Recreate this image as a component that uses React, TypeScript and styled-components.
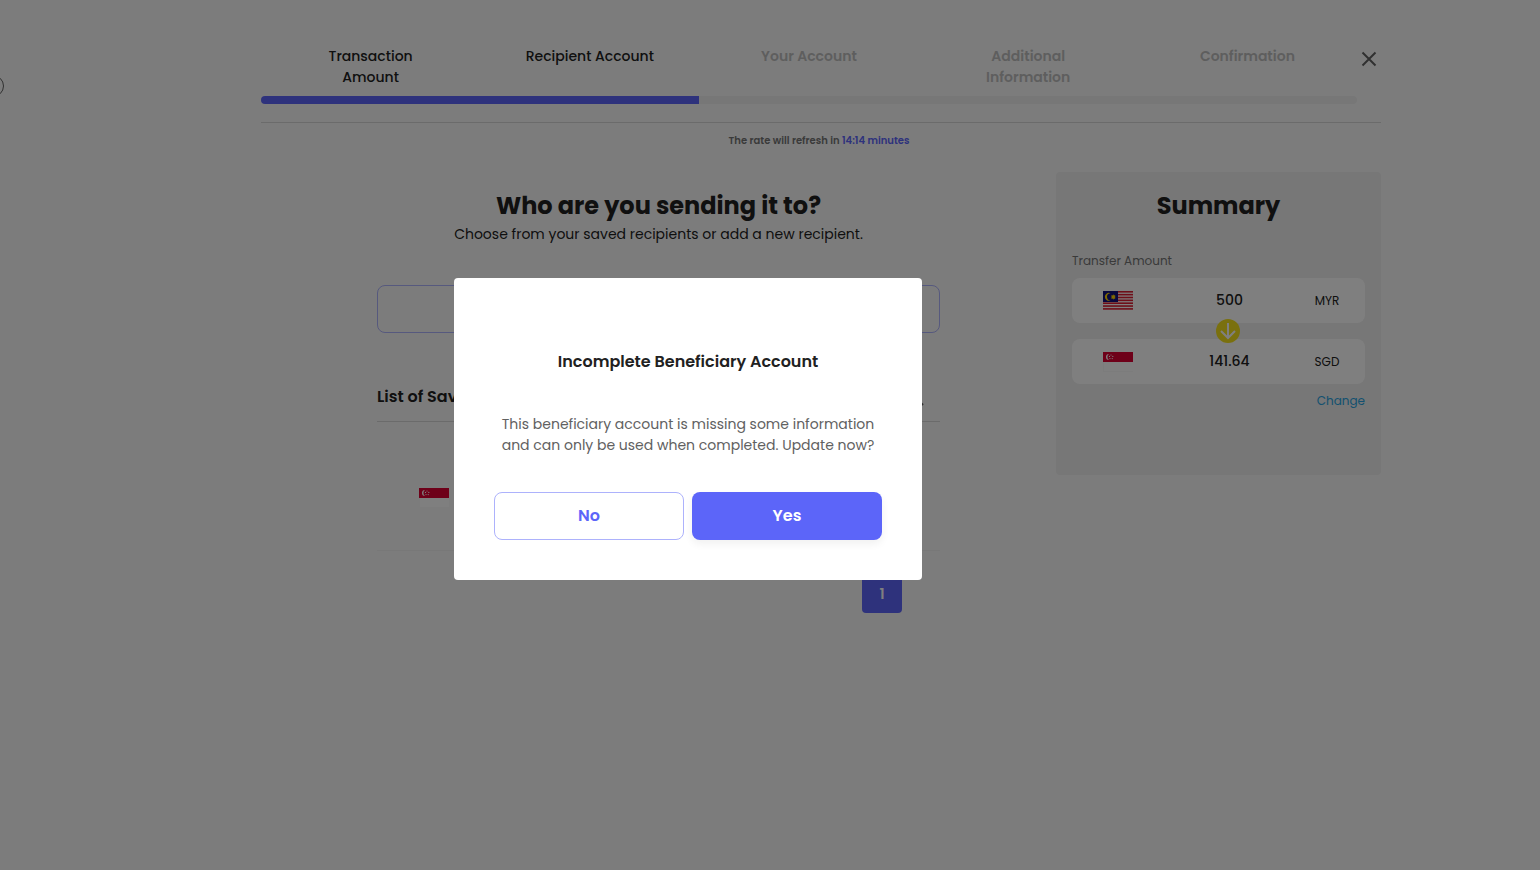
import React from 'react';
import styled, { createGlobalStyle, css } from 'styled-components';

const GlobalStyle = createGlobalStyle`
  *, *::before, *::after { box-sizing: border-box; }
  body {
    margin: 0;
    background: #f9f9f9;
    color: #212121;
    font-family: Poppins, Inter, sans-serif;
    font-size: 14px;
    line-height: 21px;
  }
  button { font-family: inherit; cursor: pointer; }
  h1, h2, h3, p, ol, ul { margin: 0; padding: 0; }
`;

const Shell = styled.div`
  display: flex;
  min-height: 100vh;
`;

const Sidebar = styled.aside`
  position: relative;
  flex: 0 0 102px;
`;

const CollapseButton = styled.button`
  position: absolute;
  top: 75px;
  left: -18px;
  width: 22px;
  height: 22px;
  padding: 0;
  border: 1px solid #616161;
  border-radius: 50%;
  background: transparent;
`;

const Page = styled.main`
  flex: 1;
  max-width: 1120px;
  margin: 0 auto;
  padding: 46px 0 40px;
`;

const Header = styled.header`
  display: flex;
  align-items: flex-start;
  padding-bottom: 18px;
  border-bottom: 1px solid #d6d6d6;
`;

const Steps = styled.ol`
  display: grid;
  grid-template-columns: repeat(5, 1fr);
  flex: 1;
  list-style: none;
`;

const Step = styled.li<{ $done?: boolean }>`
  display: flex;
  flex-direction: column;
  justify-content: space-between;
  gap: 8px;
  color: ${p => (p.$done ? '#212121' : '#bdbdbd')};
  font-weight: ${p => (p.$done ? 500 : 600)};
  text-align: center;

  &::after {
    content: '';
    height: 8px;
    background: ${p => (p.$done ? '#5c65f9' : '#eeeeee')};
  }
  &:first-child::after { border-radius: 4px 0 0 4px; }
  &:last-child::after { border-radius: 0 4px 4px 0; }
`;

const StepLabel = styled.span`
  padding: 0 44px;
`;

const CloseButton = styled.button`
  display: flex;
  width: 24px;
  height: 24px;
  margin-top: 1px;
  padding: 0;
  border: 0;
  background: none;
  color: #616161;
`;

const RateNotice = styled.p`
  margin: 9px 0 23px;
  padding-right: 4px;
  color: #757575;
  font-size: 10px;
  font-weight: 600;
  line-height: 17px;
  text-align: center;

  span { color: #5c65f9; }
`;

const Columns = styled.div`
  display: grid;
  grid-template-columns: 1fr 325px;
  align-items: start;
`;

const Recipients = styled.section`
  width: 100%;
  max-width: 563px;
  margin: 0 auto;
  padding-top: 16px;
`;

const Title = styled.h1`
  font-size: 24px;
  font-weight: 700;
  line-height: 36px;
  text-align: center;
`;

const Subtitle = styled.p`
  text-align: center;
`;

const buttonBase = css`
  width: 100%;
  height: 48px;
  border-radius: 8px;
  font-size: 16px;
  font-weight: 600;
  line-height: 24px;
`;

const OutlineButton = styled.button`
  ${buttonBase}
  border: 1px solid #adb2fc;
  background: transparent;
  color: #5c65f9;
`;

const PrimaryButton = styled.button`
  ${buttonBase}
  border: 0;
  background: #5c65f9;
  box-shadow: 0 4px 8px rgba(0, 0, 0, 0.06);
  color: #ffffff;
`;

const AddRow = styled.div`
  display: flex;
  margin: 40px 0 52px;
`;

const ListHeader = styled.div`
  display: flex;
  align-items: center;
  justify-content: space-between;
  padding: 0 16px 12px 0;
  border-bottom: 1px solid #d6d6d6;
`;

const ListTitle = styled.h2`
  font-size: 16px;
  font-weight: 600;
  line-height: 24px;
`;

const SearchButton = styled.button`
  display: flex;
  padding: 0;
  border: 0;
  background: none;
  color: #616161;
`;

const RecipientList = styled.ul`
  list-style: none;
`;

const RecipientItem = styled.li`
  display: flex;
  align-items: center;
  height: 129px;
  padding: 24px 42px 0;
  border-bottom: 1px solid #f0f0f0;
`;

const Pagination = styled.nav`
  display: flex;
  justify-content: flex-end;
  padding: 22px 38px 0 0;
`;

const PageButton = styled.button`
  width: 40px;
  height: 40px;
  padding: 2px 8px 0;
  border: 0;
  border-radius: 4px;
  background: #5c65f9;
  color: #ffffff;
  font-size: 14px;
  font-weight: 600;
`;

const Summary = styled.aside`
  padding: 16px 16px 64px;
  border-radius: 4px;
  background: #eeeeee;
`;

const SummaryLabel = styled.p`
  margin: 28px 0 8px;
  color: #757575;
  font-size: 12px;
  line-height: 18px;
`;

const AmountCard = styled.div`
  display: grid;
  grid-template-columns: 98px 1fr 76px;
  align-items: center;
  height: 45px;
  border-radius: 8px;
  background: #ffffff;
  text-align: center;

  svg { margin-left: 31px; }
`;

const Amount = styled.strong`
  font-weight: 500;
`;

const Currency = styled.span`
  font-size: 12px;
`;

const Connector = styled.div`
  position: relative;
  display: flex;
  align-items: center;
  justify-content: center;
  height: 16px;
  padding-left: 19px;
`;

const ArrowIcon = styled.svg`
  flex: none;
`;

const ChangeRow = styled.div`
  display: flex;
  justify-content: flex-end;
  padding-top: 8px;
`;

const ChangeLink = styled.a`
  padding-bottom: 1px;
  color: #29a3e0;
  font-size: 12px;
  line-height: 18px;
  text-decoration: none;
`;

const Overlay = styled.div`
  position: fixed;
  inset: 0;
  display: flex;
  align-items: center;
  justify-content: center;
  padding: 0 164px 12px 0;
  background: rgba(0, 0, 0, 0.5);
`;

const Dialog = styled.div`
  width: 468px;
  padding: 72px 40px 40px;
  border-radius: 4px;
  background: #ffffff;
  text-align: center;
`;

const DialogTitle = styled.h2`
  font-size: 16px;
  font-weight: 600;
  line-height: 24px;
`;

const DialogText = styled.p`
  margin: 40px 0 36px;
  color: #616161;
`;

const DialogActions = styled.div`
  display: grid;
  grid-template-columns: 1fr 1fr;
  gap: 8px;
`;

const MalaysiaFlag = () => (
  <svg width="30" height="19" viewBox="0 0 30 19" role="img" aria-label="Malaysia">
    <rect width="30" height="19" fill="#ffffff" />
    {[0, 1, 2, 3, 4, 5, 6].map(i => (
      <rect key={i} y={i * 2.85} width="30" height="1.6" fill="#dc1e32" />
    ))}
    <rect width="15" height="11" fill="#10107a" />
    <path d="M7.6 2.2a4 4 0 1 0 0 7.2 3.6 3.6 0 1 1 0-7.2z" fill="#ffd500" />
    <path d="M10.3 3.3l.6 1.3 1.4-.5-.5 1.3 1.2.6-1.2.6.5 1.3-1.4-.5-.6 1.3-.6-1.3-1.4.5.5-1.3-1.2-.6 1.2-.6-.5-1.3 1.4.5z" fill="#ffd500" />
  </svg>
);

const SingaporeFlag = () => (
  <svg width="30" height="20" viewBox="0 0 30 20" role="img" aria-label="Singapore">
    <rect width="30" height="20" fill="#f9f9f9" />
    <rect x="1" y="10" width="29" height="9" fill="#ffffff" />
    <rect width="30" height="10" fill="#dc0032" />
    <path d="M6 2a3 3 0 1 0 0 6 3.6 3.6 0 0 1 0-6z" fill="#ffffff" />
    <g fill="#ffffff">
      <circle cx="8" cy="3" r=".6" />
      <circle cx="6.5" cy="4.4" r=".6" />
      <circle cx="9.8" cy="4.4" r=".6" />
      <circle cx="7" cy="6.6" r=".6" />
      <circle cx="9.2" cy="6.6" r=".6" />
    </g>
  </svg>
);

const steps = [
  { label: 'Transaction Amount', done: true },
  { label: 'Recipient Account', done: true },
  { label: 'Your Account', done: false },
  { label: 'Additional Information', done: false },
  { label: 'Confirmation', done: false },
];

export default function App() {
  return (
    <>
      <GlobalStyle />
      <Shell>
        <Sidebar>
          <CollapseButton type="button" aria-label="Toggle menu" />
        </Sidebar>
        <Page>
          <Header>
            <Steps>
              {steps.map(s => (
                <Step key={s.label} $done={s.done}>
                  <StepLabel>{s.label}</StepLabel>
                </Step>
              ))}
            </Steps>
            <CloseButton type="button" aria-label="Close">
              <svg width="24" height="24" viewBox="0 0 24 24" stroke="currentColor" strokeWidth="2">
                <path d="M5.5 5.5l13 13M18.5 5.5l-13 13" />
              </svg>
            </CloseButton>
          </Header>
          <RateNotice>
            The rate will refresh in <span>14:14 minutes</span>
          </RateNotice>
          <Columns>
            <Recipients>
              <Title>Who are you sending it to?</Title>
              <Subtitle>Choose from your saved recipients or add a new recipient.</Subtitle>
              <AddRow>
                <OutlineButton type="button" aria-label="Add a new recipient" />
              </AddRow>
              <ListHeader>
                <ListTitle>List of Saved</ListTitle>
                <SearchButton type="button" aria-label="Search">
                  <svg width="18" height="18" viewBox="0 0 18 18" fill="none" stroke="currentColor" strokeWidth="2">
                    <circle cx="7" cy="7" r="5" />
                    <path d="M11 11l6 6" />
                  </svg>
                </SearchButton>
              </ListHeader>
              <RecipientList>
                <RecipientItem>
                  <SingaporeFlag />
                </RecipientItem>
              </RecipientList>
              <Pagination aria-label="Pages">
                <PageButton type="button">1</PageButton>
              </Pagination>
            </Recipients>
            <Summary>
              <Title as="h2">Summary</Title>
              <SummaryLabel>Transfer Amount</SummaryLabel>
              <AmountCard>
                <MalaysiaFlag />
                <Amount>500</Amount>
                <Currency>MYR</Currency>
              </AmountCard>
              <Connector>
                <ArrowIcon width="24" height="24" viewBox="0 0 24 24" fill="none">
                  <circle cx="12" cy="12" r="12" fill="#f5e11c" />
                  <path d="M12 4v15M5 12l7 7 7-7" stroke="#ffffff" strokeWidth="2" />
                </ArrowIcon>
              </Connector>
              <AmountCard>
                <SingaporeFlag />
                <Amount>141.64</Amount>
                <Currency>SGD</Currency>
              </AmountCard>
              <ChangeRow>
                <ChangeLink href="#change">Change</ChangeLink>
              </ChangeRow>
            </Summary>
          </Columns>
        </Page>
      </Shell>
      <Overlay>
        <Dialog role="dialog" aria-modal="true" aria-labelledby="dialog-title">
          <DialogTitle id="dialog-title">Incomplete Beneficiary Account</DialogTitle>
          <DialogText>
            This beneficiary account is missing some information and can only be used when completed. Update now?
          </DialogText>
          <DialogActions>
            <OutlineButton type="button">No</OutlineButton>
            <PrimaryButton type="button">Yes</PrimaryButton>
          </DialogActions>
        </Dialog>
      </Overlay>
    </>
  );
}
